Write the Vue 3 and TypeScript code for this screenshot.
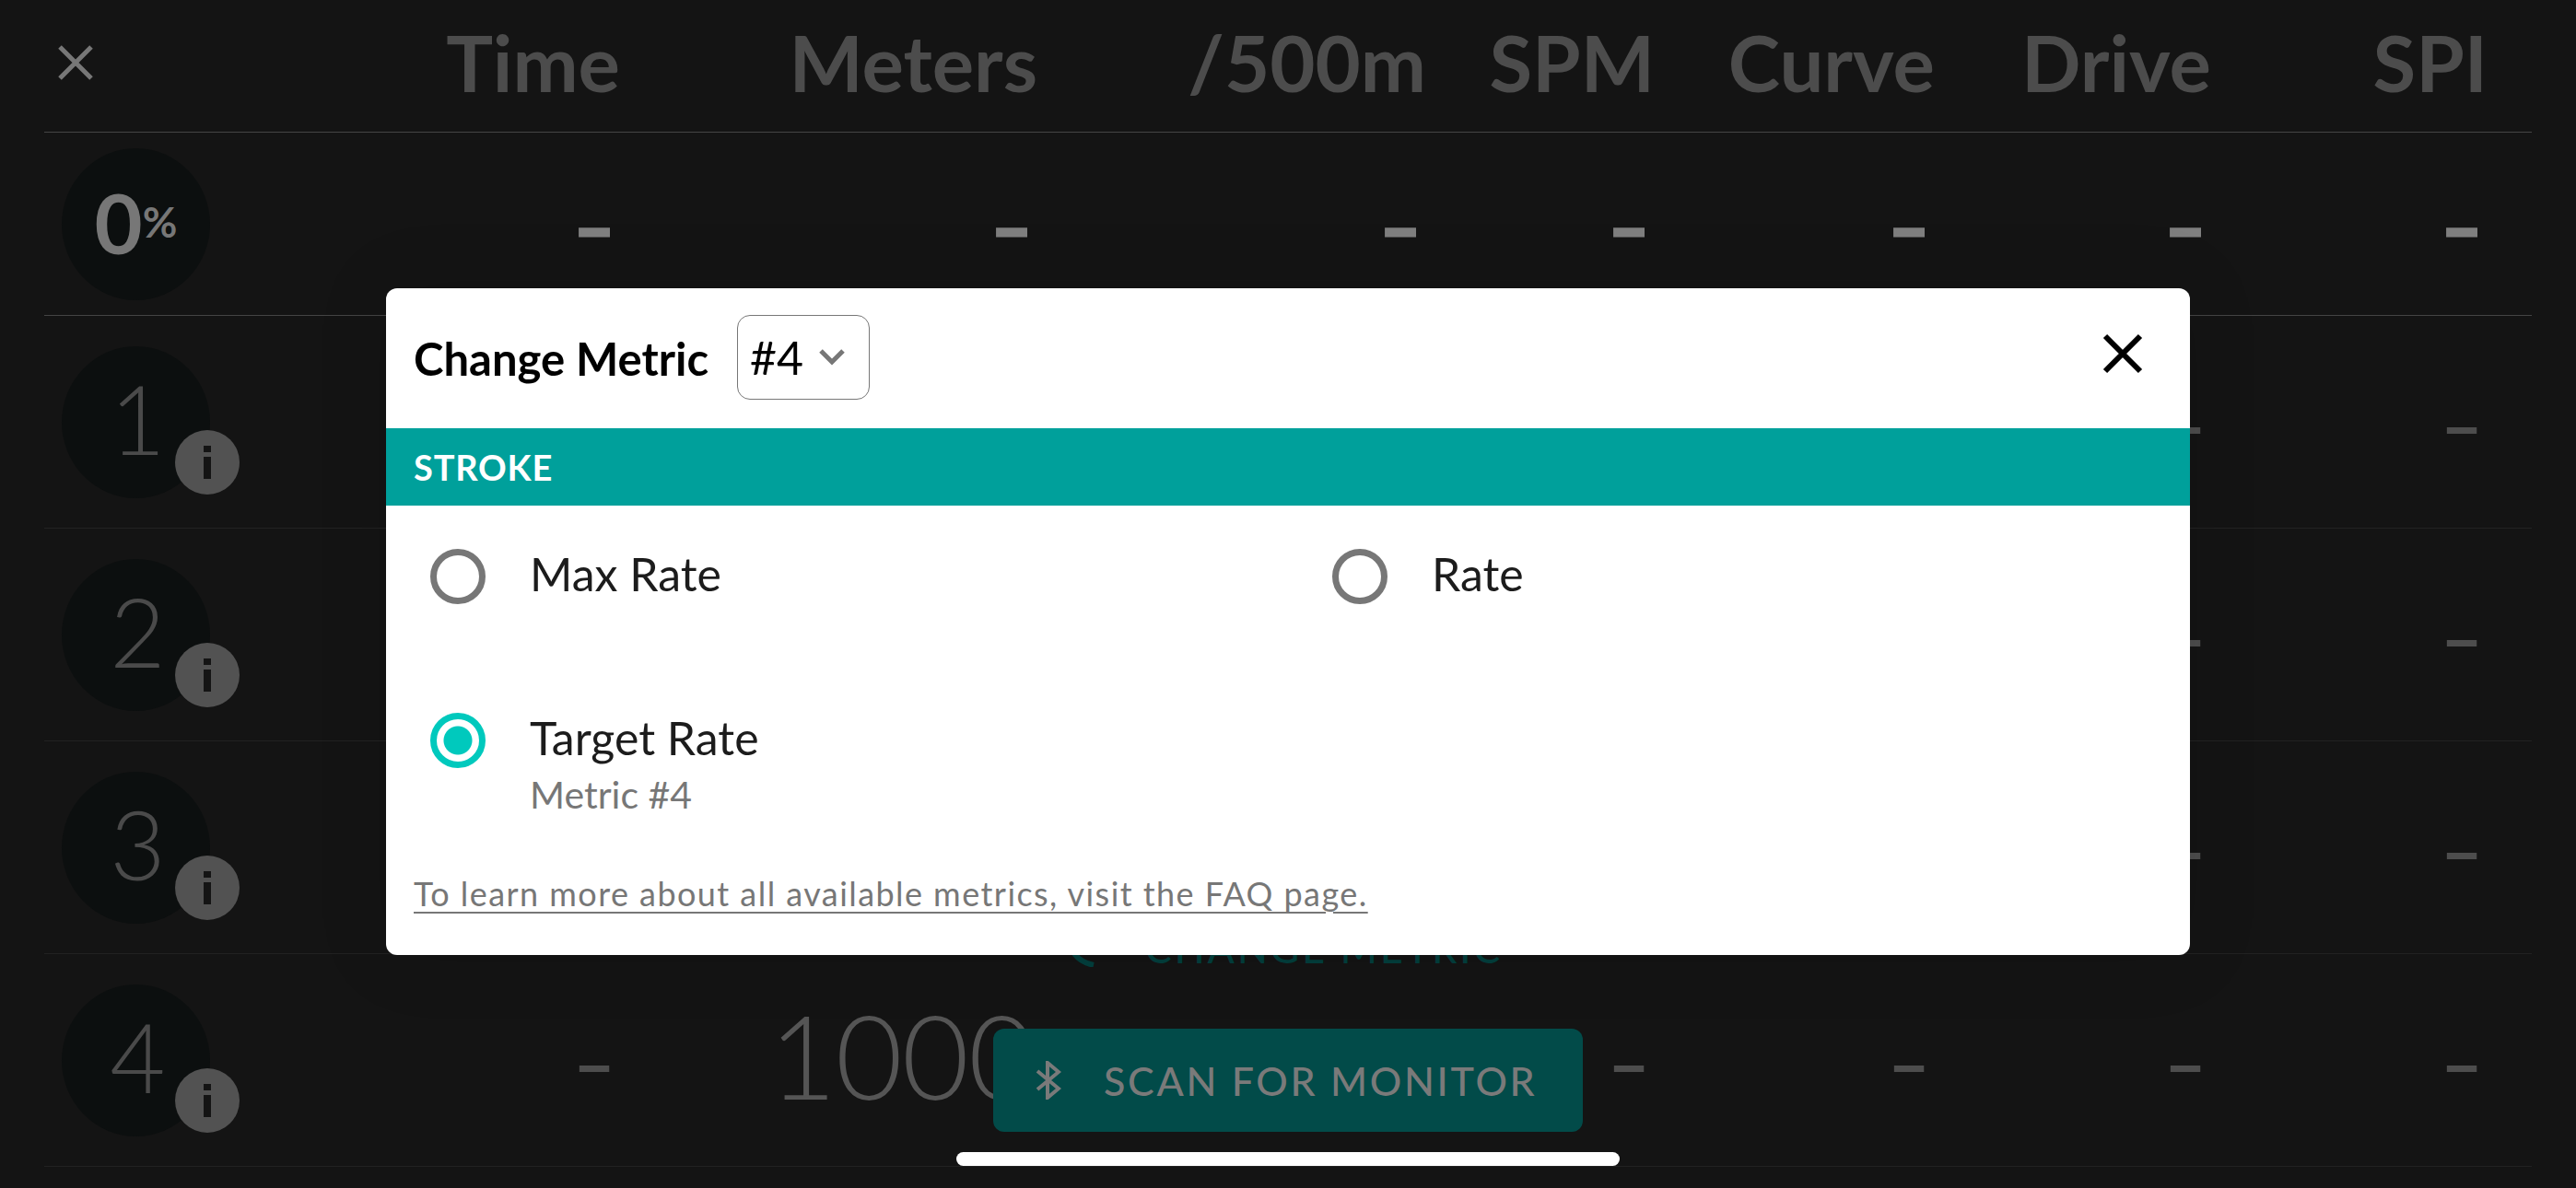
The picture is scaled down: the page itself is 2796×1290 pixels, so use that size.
<script setup lang="ts">
interface MetricRow {
  id: number;
  values: string[];
}

const columns: string[] = ["Time", "Meters", "/500m", "SPM", "Curve", "Drive", "SPI"];

const rows: MetricRow[] = [1, 2, 3, 4].map((id) => ({
  id,
  values: columns.map((col) => (id === 4 && col === "Meters" ? "1000" : "–")),
}));
</script>

<template>
  <div class="screen">
    <div class="table">
      <div class="row head-row">
        <div class="lead">
          <svg class="close-icon" width="38" height="38" viewBox="0 0 38 38">
            <path d="M2 2 L36 36 M36 2 L2 36" />
          </svg>
        </div>
        <div v-for="col in columns" :key="col" class="head-cell">{{ col }}</div>
      </div>

      <div class="row total-row">
        <div class="lead">
          <div class="disc">
            <span class="percent-num">0</span><span class="percent-sign">%</span>
          </div>
        </div>
        <div v-for="col in columns" :key="col" class="cell total-cell">–</div>
      </div>

      <div v-for="row in rows" :key="row.id" class="row metric-row">
        <div class="lead">
          <div class="disc">
            <span class="row-num">{{ row.id }}</span>
            <svg class="info" width="70" height="70" viewBox="0 0 70 70">
              <circle cx="35" cy="35" r="35" fill="#525252" />
              <rect x="31" y="17" width="8" height="7" fill="#141414" />
              <rect x="31" y="29" width="8" height="24" fill="#141414" />
            </svg>
          </div>
        </div>
        <div
          v-for="(val, i) in row.values"
          :key="i"
          class="cell"
          :class="{ big: val !== '–' }"
        >
          {{ val }}
        </div>
      </div>
    </div>

    <div class="change-metric">
      <svg width="36" height="40" viewBox="0 0 36 40">
        <path d="M4 2 C6 24 14 34 32 38" fill="none" stroke="#033f3d" stroke-width="6" />
      </svg>
      <span>CHANGE METRIC</span>
    </div>

    <button class="scan-btn" type="button">
      <svg class="bt-icon" width="28" height="42" viewBox="0 0 28 42">
        <path d="M2 11 L25 30 L13 40 L13 2 L25 12 L2 31" />
      </svg>
      <span>SCAN FOR MONITOR</span>
    </button>

    <div class="overlay">
      <div class="modal">
        <div class="modal-head">
          <span class="modal-title">Change Metric</span>
          <div class="select">
            <span>#4</span>
            <svg width="30" height="20" viewBox="0 0 30 20">
              <path d="M3 3 L15 15 L27 3" />
            </svg>
          </div>
          <svg class="modal-close" width="44" height="44" viewBox="0 0 44 44">
            <path d="M3 3 L41 41 M41 3 L3 41" />
          </svg>
        </div>

        <div class="section">STROKE</div>

        <div class="options">
          <label class="option">
            <span class="radio"></span>
            <span class="opt-label">Max Rate</span>
          </label>
          <label class="option">
            <span class="radio"></span>
            <span class="opt-label">Rate</span>
          </label>
          <label class="option">
            <span class="radio checked"></span>
            <span class="opt-text">
              <span class="opt-label">Target Rate</span>
              <span class="opt-sub">Metric #4</span>
            </span>
          </label>
        </div>

        <a class="faq">To learn more about all available metrics, visit the FAQ page.</a>
      </div>
    </div>

    <div class="home-bar"></div>
  </div>
</template>

<style>
html,
body {
  margin: 0;
  background: #141414;
}
</style>

<style scoped>
.screen {
  position: relative;
  width: 2796px;
  height: 1290px;
  padding: 0 48px;
  box-sizing: border-box;
  overflow: hidden;
  background: #141414;
  font-family: "Lato", "Noto Sans", sans-serif;
}

.row {
  display: grid;
  grid-template-columns: 180px 442px 453px 422px 248px 304px 300px 300px;
  align-items: center;
  box-sizing: border-box;
}

.head-row {
  height: 144px;
  border-bottom: 1px solid #444;
}

.total-row {
  height: 199px;
  border-bottom: 1px solid #444;
}

.metric-row {
  height: 231px;
  border-bottom: 1px solid #222;
}

.lead {
  display: flex;
  align-items: center;
}

.close-icon {
  margin-left: 15px;
  margin-top: -8px;
}

.close-icon path {
  fill: none;
  stroke: #777;
  stroke-width: 5;
}

.head-cell {
  color: #4c4c4c;
  font-size: 85px;
  font-weight: 700;
  text-align: right;
  line-height: 1;
  margin-top: -8px;
  margin-right: -3px;
}

.cell {
  color: #4d4d4d;
  font-size: 76px;
  font-weight: 400;
  text-align: right;
  padding-right: 3px;
  line-height: 1;
  margin-top: 6px;
  -webkit-text-stroke: 2px #4d4d4d;
}

.cell.big {
  font-size: 126px;
  font-weight: 300;
  letter-spacing: -1px;
  padding-right: 0;
  margin-top: -10px;
  color: #555;
  -webkit-text-stroke: 0;
}

.total-cell {
  color: #7f7f7f;
  font-weight: 900;
  -webkit-text-stroke: 3px #7f7f7f;
}

.disc {
  position: relative;
  display: flex;
  align-items: center;
  justify-content: center;
  width: 165px;
  height: 165px;
  margin-left: 19px;
  border-radius: 50%;
  background: #0c0f0f;
  line-height: 1;
}

.percent-num {
  margin-top: -4px;
  color: #777;
  font-size: 90px;
  font-weight: 700;
}

.percent-sign {
  margin-top: -4px;
  color: #777;
  font-size: 46px;
  font-weight: 700;
}

.row-num {
  margin-top: -8px;
  margin-left: 4px;
  color: #4a4a4a;
  font-size: 104px;
  font-weight: 300;
}

.info {
  position: absolute;
  left: 123px;
  top: 91px;
}

.change-metric {
  position: absolute;
  left: 1155px;
  top: 1004px;
  display: flex;
  align-items: center;
  gap: 52px;
  color: #033f3d;
  font-size: 43px;
  font-weight: 500;
  letter-spacing: 3px;
}

.scan-btn {
  position: absolute;
  left: 1078px;
  top: 1117px;
  width: 640px;
  height: 112px;
  display: flex;
  align-items: center;
  gap: 46px;
  padding: 0 0 0 46px;
  box-sizing: border-box;
  border: none;
  border-radius: 12px;
  background: #024b49;
  color: #7a7a7a;
  font-family: inherit;
  font-size: 43px;
  font-weight: 500;
  letter-spacing: 2.7px;
}

.bt-icon path {
  fill: none;
  stroke: #7a7a7a;
  stroke-width: 4;
}

.overlay {
  position: absolute;
  inset: 0;
  display: flex;
  justify-content: center;
  align-items: flex-start;
  padding-top: 313px;
  box-sizing: border-box;
}

.modal {
  display: flex;
  flex-direction: column;
  width: 1958px;
  height: 724px;
  border-radius: 12px;
  background: #fff;
  overflow: hidden;
  box-shadow: 0 0 80px rgba(0, 0, 0, 0.12);
}

.modal-head {
  display: flex;
  align-items: center;
  height: 152px;
  padding: 0 51px 0 30px;
  flex-shrink: 0;
}

.modal-title {
  color: #000;
  font-size: 49px;
  font-weight: 700;
}

.select {
  display: flex;
  align-items: center;
  gap: 16px;
  width: 144px;
  height: 92px;
  margin-left: 31px;
  margin-top: -2px;
  padding-left: 13px;
  box-sizing: border-box;
  border: 1px solid #777;
  border-radius: 14px;
  color: #000;
  font-size: 50px;
}

.select path {
  fill: none;
  stroke: #777;
  stroke-width: 5;
}

.modal-close {
  margin-left: auto;
  margin-top: -10px;
}

.modal-close path {
  fill: none;
  stroke: #000;
  stroke-width: 6;
}

.section {
  height: 84px;
  padding-left: 30px;
  flex-shrink: 0;
  background: #00a09b;
  color: #fff;
  font-size: 38px;
  font-weight: 700;
  letter-spacing: 0.8px;
  line-height: 84px;
}

.options {
  display: grid;
  grid-template-columns: 1fr 1fr;
  grid-template-rows: 178px auto;
  padding-top: 47px;
}

.option {
  display: flex;
  align-items: flex-start;
  gap: 48px;
  padding-left: 48px;
}

.radio {
  width: 60px;
  height: 60px;
  box-sizing: border-box;
  border: 7px solid #777;
  border-radius: 50%;
  flex-shrink: 0;
}

.radio.checked {
  border-color: #00c9bd;
  background: radial-gradient(circle, #00c9bd 15px, #fff 16px);
}

.opt-text {
  display: flex;
  flex-direction: column;
}

.opt-label {
  color: #1c1c1c;
  font-size: 50px;
  line-height: 54px;
}

.opt-sub {
  margin-top: 10px;
  color: #777;
  font-size: 41px;
  line-height: 50px;
}

.faq {
  margin: 60px 0 0 30px;
  color: #777;
  font-size: 36px;
  letter-spacing: 1.44px;
  text-decoration: underline;
  text-underline-offset: 6px;
  text-decoration-thickness: 2px;
}

.home-bar {
  position: absolute;
  left: 1038px;
  top: 1251px;
  width: 720px;
  height: 15px;
  border-radius: 8px;
  background: #fff;
}
</style>
